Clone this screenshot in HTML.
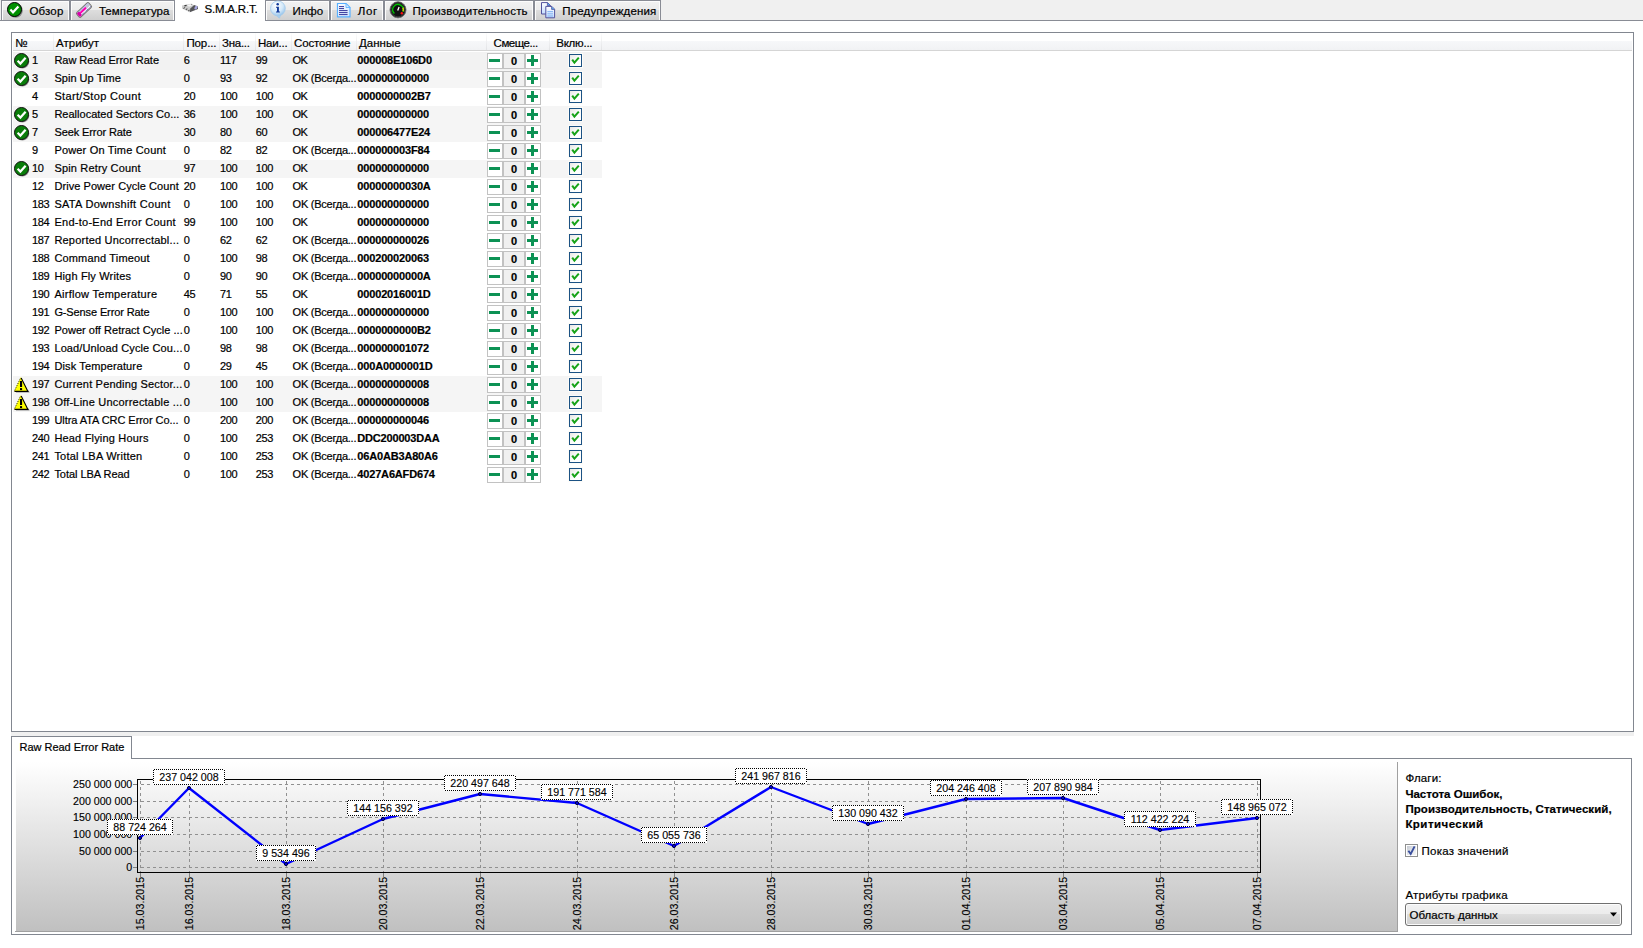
<!DOCTYPE html>
<html lang="ru"><head><meta charset="utf-8"><title>S.M.A.R.T.</title>
<style>
html,body{margin:0;padding:0;background:#fff;}
body{width:1643px;height:948px;position:relative;overflow:hidden;font-family:"Liberation Sans",sans-serif;color:#000;}
.t{position:absolute;white-space:pre;-webkit-text-stroke:0.2px #000;}
.a{position:absolute;}
.tab{position:absolute;top:0;height:20px;box-sizing:border-box;border:1px solid #898c95;border-bottom:none;
 background:linear-gradient(#f2f2f2 0,#ebebeb 50%,#dddddd 50%,#cfcfcf 100%);box-shadow:inset 1px 1px 0 #fcfcfc,inset -1px 0 0 #fcfcfc;}
.row{position:absolute;left:13px;width:589px;height:18px;background:#f2f2f2;}
.btn{position:absolute;box-sizing:border-box;height:16px;border:1px solid #c2c2c2;background:#fff;}
.cb{position:absolute;box-sizing:border-box;width:13px;height:13px;border:1px solid #1c5284;background:linear-gradient(135deg,#e8e8e4 0,#fff 60%);box-shadow:0 0 0 1px #fdfcf8;}
.hs{position:absolute;top:33px;width:1px;height:17px;background:linear-gradient(#fdfdfd,#e2e3e6);}
</style></head><body>

<div class="a" style="left:0;top:0;width:1643px;height:20px;background:#f0f0f0"></div>
<div class="a" style="left:0;top:20px;width:1643px;height:1px;background:#898c95"></div>
<div class="tab" style="left:1px;width:69px"></div>
<span class="t" style="left:29.40px;top:3.52px;font-size:11.5px;line-height:15px;letter-spacing:0.176px;">Обзор</span>
<div class="tab" style="left:70px;width:105px"></div>
<span class="t" style="left:98.90px;top:3.52px;font-size:11.5px;line-height:15px;letter-spacing:0.095px;">Температура</span>
<div class="tab" style="left:265px;width:65px"></div>
<span class="t" style="left:292.60px;top:3.52px;font-size:11.5px;line-height:15px;letter-spacing:0.054px;">Инфо</span>
<div class="tab" style="left:330px;width:54px"></div>
<span class="t" style="left:357.80px;top:3.52px;font-size:11.5px;line-height:15px;letter-spacing:0.686px;">Лог</span>
<div class="tab" style="left:384px;width:150px"></div>
<span class="t" style="left:412.60px;top:3.52px;font-size:11.5px;line-height:15px;letter-spacing:0.199px;">Производительность</span>
<div class="tab" style="left:534px;width:127px"></div>
<span class="t" style="left:562.30px;top:3.52px;font-size:11.5px;line-height:15px;letter-spacing:0.159px;">Предупреждения</span>
<div class="a" style="left:175px;top:0;width:90px;height:21px;background:#fff"></div>
<span class="t" style="left:204.40px;top:1.52px;font-size:11.5px;line-height:15px;letter-spacing:-0.175px;">S.M.A.R.T.</span>
<svg class="a" style="left:6px;top:1px" width="18" height="18" viewBox="0 0 18 18"><circle cx="9.6" cy="9.6" r="7.2" fill="#555" opacity=".6"/><circle cx="8.5" cy="8.5" r="7" fill="#009000" stroke="#000" stroke-width="1"/><path d="M4.4 8.6 L7 11.3 L12.4 5.6" fill="none" stroke="#fff" stroke-width="2.2"/></svg>
<svg class="a" style="left:74.8px;top:0.85px" width="18" height="18" viewBox="0 0 18 18"><g transform="rotate(-43 9 9)"><rect x="0.8" y="6" width="16.4" height="6" rx="1.4" fill="#ececf6" stroke="#767672" stroke-width="1.1"/><rect x="1.6" y="6.6" width="15" height="1.1" fill="#b4b4e4"/><rect x="1.4" y="7.7" width="10.8" height="2.1" fill="#ff00b0"/><rect x="12.2" y="7.7" width="4.4" height="2.1" fill="#c4c4d4"/><rect x="4.4" y="9.8" width="12.2" height=".9" fill="#fff"/><path d="M4.4 11 H16.6" stroke="#30309c" stroke-width=".8" stroke-dasharray="1 .8"/><rect x="1.3" y="6.6" width="3" height="4.8" rx=".8" fill="#d800a8"/></g></svg>
<svg class="a" style="left:181px;top:2px" width="18" height="12" viewBox="0 0 18 12"><path d="M1 3.4 L9.5 1.7 L13.4 3.2 L9.2 6.8 L8.8 10.3 L1 6.6 Z" fill="#cdcdcd"/><path d="M9.2 6.6 L13.2 3.1 L16.9 4.5 L17 7 L8.8 10.3 Z" fill="#555558"/><ellipse cx="14.9" cy="5.7" rx="1.3" ry="2" fill="#a8a8e0" transform="rotate(35 14.9 5.7)"/><path d="M6 2.9 L10 2.2 L11.8 3 L8 4.8 Z" fill="#f4f4f4"/><path d="M3.4 3.9 L5.6 3.3" stroke="#3a3a3a" stroke-width="1.3"/><path d="M2.4 6.6 L4 5.4 M4.8 7.8 L6.4 6.6 M7.2 9 L8.6 7.9" stroke="#5a5a5a" stroke-width="1.1"/><circle cx="10.6" cy="2.4" r=".7" fill="#9a9a9a"/></svg>
<svg class="a" style="left:269px;top:0px" width="18" height="19" viewBox="0 0 18 19"><defs><radialGradient id="bg1" cx=".4" cy=".3" r=".8"><stop offset="0" stop-color="#ffffff"/><stop offset=".55" stop-color="#d4e9f9"/><stop offset="1" stop-color="#86b9e6"/></radialGradient></defs><path d="M6.2 14.6 L10.4 18.2 L11.8 14.8 Z" fill="#a8d0f0" stroke="#9cc6ea" stroke-width=".6"/><circle cx="8.9" cy="8.4" r="7.4" fill="url(#bg1)" stroke="#a4cbec" stroke-width=".8"/><circle cx="8.7" cy="4.2" r="1.25" fill="#123a9a"/><path d="M7 6.7 H9.9 V11.4 H10.9 V12.5 H7 V11.4 H8 V7.8 H7 Z" fill="#123a9a"/></svg>
<svg class="a" style="left:336px;top:2px" width="16" height="16" viewBox="0 0 16 16"><defs><linearGradient id="dg" x1="0" y1="0" x2="1" y2="1"><stop offset="0" stop-color="#ffffff"/><stop offset="1" stop-color="#cfe4ff"/></linearGradient></defs><path d="M1.5 1.5 H10 L14 5.5 V14.8 H1.5 Z" fill="url(#dg)" stroke="#58b0ff" stroke-width="1.2"/><path d="M10 1.5 V5.5 H14 Z" fill="#d8ecff" stroke="#58b0ff" stroke-width=".8"/><g stroke="#34349a" stroke-width="1"><path d="M3 4.6 H8"/><path d="M3 6.6 H8"/><path d="M3 8.6 H11.6"/><path d="M3 10.6 H11.6"/><path d="M3 12.6 H11.6"/></g></svg>
<svg class="a" style="left:389px;top:1px" width="18" height="18" viewBox="0 0 18 18"><circle cx="9" cy="8.8" r="8" fill="#101010" stroke="#707070" stroke-width="1"/><circle cx="9" cy="8.8" r="7" fill="none" stroke="#3a3a3a" stroke-width="1"/><path d="M5.4 12.6 A5.3 5.3 0 1 1 14 10.6" fill="none" stroke="#00c000" stroke-width="1.4"/><path d="M13.9 6.6 A5.3 5.3 0 0 1 14.1 10.4" fill="none" stroke="#e0d000" stroke-width="1.4"/><circle cx="12.8" cy="12.2" r="1.2" fill="#ff1010"/><path d="M8.7 9.6 L10.1 6" stroke="#fff" stroke-width="1.3"/></svg>
<svg class="a" style="left:540px;top:1px" width="16" height="18" viewBox="0 0 16 18"><defs><linearGradient id="cg" x1="0" y1="0" x2="0" y2="1"><stop offset="0" stop-color="#ffffff"/><stop offset="1" stop-color="#c4dcff"/></linearGradient></defs><path d="M1.5 1.6 H7.6 L10.4 4.4 V13 H1.5 Z" fill="url(#cg)" stroke="#52529c" stroke-width="1"/><path d="M7.4 1.6 V4.6 H10.4" fill="#58a8f0" stroke="#52529c" stroke-width=".8"/><path d="M5.8 5.4 H11.8 L14.6 8.2 V16.8 H5.8 Z" fill="url(#cg)" stroke="#52529c" stroke-width="1"/><path d="M11.6 5.4 V8.4 H14.6" fill="#58a8f0" stroke="#52529c" stroke-width=".8"/><g stroke="#8cb8f4" stroke-width="1.2"><path d="M7.4 10.6 H13"/><path d="M7.4 12.8 H13"/><path d="M7.4 15 H13"/></g></svg>
<div class="a" style="left:11px;top:32px;width:1623px;height:700px;box-sizing:border-box;border:1px solid #828790;background:#fff"></div>
<div class="a" style="left:13px;top:33px;width:1619px;height:17px;background:linear-gradient(#fff 0,#fff 45%,#f7f8fa 45%,#f1f2f4 100%)"></div>
<div class="a" style="left:13px;top:50px;width:1619px;height:1px;background:#d5d5d5"></div>
<div class="hs" style="left:53px"></div>
<div class="hs" style="left:183px"></div>
<div class="hs" style="left:219px"></div>
<div class="hs" style="left:255px"></div>
<div class="hs" style="left:291px"></div>
<div class="hs" style="left:356px"></div>
<div class="hs" style="left:486px"></div>
<div class="hs" style="left:549px"></div>
<div class="hs" style="left:601px"></div>
<span class="t" style="left:15.30px;top:35.52px;font-size:11.5px;line-height:15px;">№</span>
<span class="t" style="left:56.00px;top:35.52px;font-size:11.5px;line-height:15px;letter-spacing:0.020px;">Атрибут</span>
<span class="t" style="left:186.40px;top:35.52px;font-size:11.5px;line-height:15px;letter-spacing:-0.093px;">Пор...</span>
<span class="t" style="left:222.00px;top:35.52px;font-size:11.5px;line-height:15px;letter-spacing:-0.264px;">Зна...</span>
<span class="t" style="left:258.00px;top:35.52px;font-size:11.5px;line-height:15px;letter-spacing:-0.203px;">Наи...</span>
<span class="t" style="left:294.00px;top:35.52px;font-size:11.5px;line-height:15px;letter-spacing:-0.132px;">Состояние</span>
<span class="t" style="left:359.00px;top:35.52px;font-size:11.5px;line-height:15px;letter-spacing:0.023px;">Данные</span>
<span class="t" style="left:493.60px;top:35.52px;font-size:11.5px;line-height:15px;letter-spacing:-0.490px;">Смеще...</span>
<span class="t" style="left:556.30px;top:35.52px;font-size:11.5px;line-height:15px;letter-spacing:-0.252px;">Вклю...</span>
<div class="row" style="top:52px"></div>
<svg class="a" style="left:14px;top:53px" width="16" height="16" viewBox="0 0 16 16"><circle cx="8.3" cy="8.6" r="7" fill="#3a3a3a" opacity=".55"/><circle cx="7.5" cy="7.5" r="7" fill="#0a7d0a" stroke="#111" stroke-width="1"/><path d="M3.6 7.8 L6.4 10.6 L11.6 4.8" fill="none" stroke="#fff" stroke-width="2.2"/></svg>
<span class="t" style="left:32.00px;top:53.19px;font-size:11px;line-height:14px;">1</span>
<span class="t" style="left:54.40px;top:53.19px;font-size:11px;line-height:14px;letter-spacing:-0.029px;">Raw Read Error Rate</span>
<span class="t" style="left:183.80px;top:53.19px;font-size:11px;line-height:14px;">6</span>
<span class="t" style="left:220.00px;top:53.19px;font-size:11px;line-height:14px;letter-spacing:-0.351px;">117</span>
<span class="t" style="left:255.80px;top:53.19px;font-size:11px;line-height:14px;letter-spacing:-0.368px;">99</span>
<span class="t" style="left:292.60px;top:53.19px;font-size:11px;line-height:14px;letter-spacing:-0.753px;">OK</span>
<span class="t" style="left:357.30px;top:53.19px;font-size:11px;line-height:14px;font-weight:bold;letter-spacing:-0.159px;">000008E106D0</span>
<div class="btn" style="left:487px;top:53px;width:16px"></div>
<div class="btn" style="left:503px;top:53px;width:22px;background:#f0f0f0"></div>
<div class="btn" style="left:525px;top:53px;width:16px"></div>
<div class="a" style="left:489px;top:59px;width:11px;height:3px;background:#0c9254"></div>
<div class="a" style="left:527px;top:59px;width:11px;height:3px;background:#0c9254"></div>
<div class="a" style="left:531px;top:55px;width:3px;height:11px;background:#0c9254"></div>
<span class="t" style="left:510.94px;top:54.19px;font-size:11px;line-height:14px;font-weight:bold;">0</span>
<div class="cb" style="left:569px;top:54px"></div>
<svg class="a" style="left:569px;top:54px" width="13" height="13" viewBox="0 0 13 13"><path d="M3.2 5.6 L5.4 8.6 L9.8 3.6" fill="none" stroke="#17a317" stroke-width="2"/></svg>
<div class="row" style="top:70px;background:#f5f5f5"></div>
<svg class="a" style="left:14px;top:71px" width="16" height="16" viewBox="0 0 16 16"><circle cx="8.3" cy="8.6" r="7" fill="#3a3a3a" opacity=".55"/><circle cx="7.5" cy="7.5" r="7" fill="#0a7d0a" stroke="#111" stroke-width="1"/><path d="M3.6 7.8 L6.4 10.6 L11.6 4.8" fill="none" stroke="#fff" stroke-width="2.2"/></svg>
<span class="t" style="left:32.00px;top:71.19px;font-size:11px;line-height:14px;">3</span>
<span class="t" style="left:54.40px;top:71.19px;font-size:11px;line-height:14px;letter-spacing:0.031px;">Spin Up Time</span>
<span class="t" style="left:183.80px;top:71.19px;font-size:11px;line-height:14px;">0</span>
<span class="t" style="left:220.00px;top:71.19px;font-size:11px;line-height:14px;letter-spacing:-0.368px;">93</span>
<span class="t" style="left:255.80px;top:71.19px;font-size:11px;line-height:14px;letter-spacing:-0.368px;">92</span>
<span class="t" style="left:292.60px;top:71.19px;font-size:11px;line-height:14px;letter-spacing:-0.246px;">OK (Всегда...</span>
<span class="t" style="left:357.30px;top:71.19px;font-size:11px;line-height:14px;font-weight:bold;letter-spacing:-0.153px;">000000000000</span>
<div class="btn" style="left:487px;top:71px;width:16px"></div>
<div class="btn" style="left:503px;top:71px;width:22px;background:#f0f0f0"></div>
<div class="btn" style="left:525px;top:71px;width:16px"></div>
<div class="a" style="left:489px;top:77px;width:11px;height:3px;background:#0c9254"></div>
<div class="a" style="left:527px;top:77px;width:11px;height:3px;background:#0c9254"></div>
<div class="a" style="left:531px;top:73px;width:3px;height:11px;background:#0c9254"></div>
<span class="t" style="left:510.94px;top:72.19px;font-size:11px;line-height:14px;font-weight:bold;">0</span>
<div class="cb" style="left:569px;top:72px"></div>
<svg class="a" style="left:569px;top:72px" width="13" height="13" viewBox="0 0 13 13"><path d="M3.2 5.6 L5.4 8.6 L9.8 3.6" fill="none" stroke="#17a317" stroke-width="2"/></svg>
<span class="t" style="left:32.00px;top:89.19px;font-size:11px;line-height:14px;">4</span>
<span class="t" style="left:54.40px;top:89.19px;font-size:11px;line-height:14px;letter-spacing:0.336px;">Start/Stop Count</span>
<span class="t" style="left:183.80px;top:89.19px;font-size:11px;line-height:14px;letter-spacing:-0.368px;">20</span>
<span class="t" style="left:220.00px;top:89.19px;font-size:11px;line-height:14px;letter-spacing:-0.367px;">100</span>
<span class="t" style="left:255.80px;top:89.19px;font-size:11px;line-height:14px;letter-spacing:-0.367px;">100</span>
<span class="t" style="left:292.60px;top:89.19px;font-size:11px;line-height:14px;letter-spacing:-0.753px;">OK</span>
<span class="t" style="left:357.30px;top:89.19px;font-size:11px;line-height:14px;font-weight:bold;letter-spacing:-0.157px;">0000000002B7</span>
<div class="btn" style="left:487px;top:89px;width:16px"></div>
<div class="btn" style="left:503px;top:89px;width:22px;background:#f0f0f0"></div>
<div class="btn" style="left:525px;top:89px;width:16px"></div>
<div class="a" style="left:489px;top:95px;width:11px;height:3px;background:#0c9254"></div>
<div class="a" style="left:527px;top:95px;width:11px;height:3px;background:#0c9254"></div>
<div class="a" style="left:531px;top:91px;width:3px;height:11px;background:#0c9254"></div>
<span class="t" style="left:510.94px;top:90.19px;font-size:11px;line-height:14px;font-weight:bold;">0</span>
<div class="cb" style="left:569px;top:90px"></div>
<svg class="a" style="left:569px;top:90px" width="13" height="13" viewBox="0 0 13 13"><path d="M3.2 5.6 L5.4 8.6 L9.8 3.6" fill="none" stroke="#17a317" stroke-width="2"/></svg>
<div class="row" style="top:106px;background:#f5f5f5"></div>
<svg class="a" style="left:14px;top:107px" width="16" height="16" viewBox="0 0 16 16"><circle cx="8.3" cy="8.6" r="7" fill="#3a3a3a" opacity=".55"/><circle cx="7.5" cy="7.5" r="7" fill="#0a7d0a" stroke="#111" stroke-width="1"/><path d="M3.6 7.8 L6.4 10.6 L11.6 4.8" fill="none" stroke="#fff" stroke-width="2.2"/></svg>
<span class="t" style="left:32.00px;top:107.19px;font-size:11px;line-height:14px;">5</span>
<span class="t" style="left:54.40px;top:107.19px;font-size:11px;line-height:14px;letter-spacing:0.011px;">Reallocated Sectors Co...</span>
<span class="t" style="left:183.80px;top:107.19px;font-size:11px;line-height:14px;letter-spacing:-0.368px;">36</span>
<span class="t" style="left:220.00px;top:107.19px;font-size:11px;line-height:14px;letter-spacing:-0.367px;">100</span>
<span class="t" style="left:255.80px;top:107.19px;font-size:11px;line-height:14px;letter-spacing:-0.367px;">100</span>
<span class="t" style="left:292.60px;top:107.19px;font-size:11px;line-height:14px;letter-spacing:-0.753px;">OK</span>
<span class="t" style="left:357.30px;top:107.19px;font-size:11px;line-height:14px;font-weight:bold;letter-spacing:-0.153px;">000000000000</span>
<div class="btn" style="left:487px;top:107px;width:16px"></div>
<div class="btn" style="left:503px;top:107px;width:22px;background:#f0f0f0"></div>
<div class="btn" style="left:525px;top:107px;width:16px"></div>
<div class="a" style="left:489px;top:113px;width:11px;height:3px;background:#0c9254"></div>
<div class="a" style="left:527px;top:113px;width:11px;height:3px;background:#0c9254"></div>
<div class="a" style="left:531px;top:109px;width:3px;height:11px;background:#0c9254"></div>
<span class="t" style="left:510.94px;top:108.19px;font-size:11px;line-height:14px;font-weight:bold;">0</span>
<div class="cb" style="left:569px;top:108px"></div>
<svg class="a" style="left:569px;top:108px" width="13" height="13" viewBox="0 0 13 13"><path d="M3.2 5.6 L5.4 8.6 L9.8 3.6" fill="none" stroke="#17a317" stroke-width="2"/></svg>
<div class="row" style="top:124px;background:#f5f5f5"></div>
<svg class="a" style="left:14px;top:125px" width="16" height="16" viewBox="0 0 16 16"><circle cx="8.3" cy="8.6" r="7" fill="#3a3a3a" opacity=".55"/><circle cx="7.5" cy="7.5" r="7" fill="#0a7d0a" stroke="#111" stroke-width="1"/><path d="M3.6 7.8 L6.4 10.6 L11.6 4.8" fill="none" stroke="#fff" stroke-width="2.2"/></svg>
<span class="t" style="left:32.00px;top:125.19px;font-size:11px;line-height:14px;">7</span>
<span class="t" style="left:54.40px;top:125.19px;font-size:11px;line-height:14px;letter-spacing:-0.098px;">Seek Error Rate</span>
<span class="t" style="left:183.80px;top:125.19px;font-size:11px;line-height:14px;letter-spacing:-0.368px;">30</span>
<span class="t" style="left:220.00px;top:125.19px;font-size:11px;line-height:14px;letter-spacing:-0.368px;">80</span>
<span class="t" style="left:255.80px;top:125.19px;font-size:11px;line-height:14px;letter-spacing:-0.368px;">60</span>
<span class="t" style="left:292.60px;top:125.19px;font-size:11px;line-height:14px;letter-spacing:-0.753px;">OK</span>
<span class="t" style="left:357.30px;top:125.19px;font-size:11px;line-height:14px;font-weight:bold;letter-spacing:-0.156px;">000006477E24</span>
<div class="btn" style="left:487px;top:125px;width:16px"></div>
<div class="btn" style="left:503px;top:125px;width:22px;background:#f0f0f0"></div>
<div class="btn" style="left:525px;top:125px;width:16px"></div>
<div class="a" style="left:489px;top:131px;width:11px;height:3px;background:#0c9254"></div>
<div class="a" style="left:527px;top:131px;width:11px;height:3px;background:#0c9254"></div>
<div class="a" style="left:531px;top:127px;width:3px;height:11px;background:#0c9254"></div>
<span class="t" style="left:510.94px;top:126.19px;font-size:11px;line-height:14px;font-weight:bold;">0</span>
<div class="cb" style="left:569px;top:126px"></div>
<svg class="a" style="left:569px;top:126px" width="13" height="13" viewBox="0 0 13 13"><path d="M3.2 5.6 L5.4 8.6 L9.8 3.6" fill="none" stroke="#17a317" stroke-width="2"/></svg>
<span class="t" style="left:32.00px;top:143.19px;font-size:11px;line-height:14px;">9</span>
<span class="t" style="left:54.40px;top:143.19px;font-size:11px;line-height:14px;letter-spacing:0.178px;">Power On Time Count</span>
<span class="t" style="left:183.80px;top:143.19px;font-size:11px;line-height:14px;">0</span>
<span class="t" style="left:220.00px;top:143.19px;font-size:11px;line-height:14px;letter-spacing:-0.368px;">82</span>
<span class="t" style="left:255.80px;top:143.19px;font-size:11px;line-height:14px;letter-spacing:-0.368px;">82</span>
<span class="t" style="left:292.60px;top:143.19px;font-size:11px;line-height:14px;letter-spacing:-0.246px;">OK (Всегда...</span>
<span class="t" style="left:357.30px;top:143.19px;font-size:11px;line-height:14px;font-weight:bold;letter-spacing:-0.154px;">000000003F84</span>
<div class="btn" style="left:487px;top:143px;width:16px"></div>
<div class="btn" style="left:503px;top:143px;width:22px;background:#f0f0f0"></div>
<div class="btn" style="left:525px;top:143px;width:16px"></div>
<div class="a" style="left:489px;top:149px;width:11px;height:3px;background:#0c9254"></div>
<div class="a" style="left:527px;top:149px;width:11px;height:3px;background:#0c9254"></div>
<div class="a" style="left:531px;top:145px;width:3px;height:11px;background:#0c9254"></div>
<span class="t" style="left:510.94px;top:144.19px;font-size:11px;line-height:14px;font-weight:bold;">0</span>
<div class="cb" style="left:569px;top:144px"></div>
<svg class="a" style="left:569px;top:144px" width="13" height="13" viewBox="0 0 13 13"><path d="M3.2 5.6 L5.4 8.6 L9.8 3.6" fill="none" stroke="#17a317" stroke-width="2"/></svg>
<div class="row" style="top:160px;background:#f5f5f5"></div>
<svg class="a" style="left:14px;top:161px" width="16" height="16" viewBox="0 0 16 16"><circle cx="8.3" cy="8.6" r="7" fill="#3a3a3a" opacity=".55"/><circle cx="7.5" cy="7.5" r="7" fill="#0a7d0a" stroke="#111" stroke-width="1"/><path d="M3.6 7.8 L6.4 10.6 L11.6 4.8" fill="none" stroke="#fff" stroke-width="2.2"/></svg>
<span class="t" style="left:32.00px;top:161.19px;font-size:11px;line-height:14px;letter-spacing:-0.306px;">10</span>
<span class="t" style="left:54.40px;top:161.19px;font-size:11px;line-height:14px;letter-spacing:0.165px;">Spin Retry Count</span>
<span class="t" style="left:183.80px;top:161.19px;font-size:11px;line-height:14px;letter-spacing:-0.368px;">97</span>
<span class="t" style="left:220.00px;top:161.19px;font-size:11px;line-height:14px;letter-spacing:-0.367px;">100</span>
<span class="t" style="left:255.80px;top:161.19px;font-size:11px;line-height:14px;letter-spacing:-0.367px;">100</span>
<span class="t" style="left:292.60px;top:161.19px;font-size:11px;line-height:14px;letter-spacing:-0.753px;">OK</span>
<span class="t" style="left:357.30px;top:161.19px;font-size:11px;line-height:14px;font-weight:bold;letter-spacing:-0.153px;">000000000000</span>
<div class="btn" style="left:487px;top:161px;width:16px"></div>
<div class="btn" style="left:503px;top:161px;width:22px;background:#f0f0f0"></div>
<div class="btn" style="left:525px;top:161px;width:16px"></div>
<div class="a" style="left:489px;top:167px;width:11px;height:3px;background:#0c9254"></div>
<div class="a" style="left:527px;top:167px;width:11px;height:3px;background:#0c9254"></div>
<div class="a" style="left:531px;top:163px;width:3px;height:11px;background:#0c9254"></div>
<span class="t" style="left:510.94px;top:162.19px;font-size:11px;line-height:14px;font-weight:bold;">0</span>
<div class="cb" style="left:569px;top:162px"></div>
<svg class="a" style="left:569px;top:162px" width="13" height="13" viewBox="0 0 13 13"><path d="M3.2 5.6 L5.4 8.6 L9.8 3.6" fill="none" stroke="#17a317" stroke-width="2"/></svg>
<span class="t" style="left:32.00px;top:179.19px;font-size:11px;line-height:14px;letter-spacing:-0.306px;">12</span>
<span class="t" style="left:54.40px;top:179.19px;font-size:11px;line-height:14px;letter-spacing:0.066px;">Drive Power Cycle Count</span>
<span class="t" style="left:183.80px;top:179.19px;font-size:11px;line-height:14px;letter-spacing:-0.368px;">20</span>
<span class="t" style="left:220.00px;top:179.19px;font-size:11px;line-height:14px;letter-spacing:-0.367px;">100</span>
<span class="t" style="left:255.80px;top:179.19px;font-size:11px;line-height:14px;letter-spacing:-0.367px;">100</span>
<span class="t" style="left:292.60px;top:179.19px;font-size:11px;line-height:14px;letter-spacing:-0.753px;">OK</span>
<span class="t" style="left:357.30px;top:179.19px;font-size:11px;line-height:14px;font-weight:bold;letter-spacing:-0.157px;">00000000030A</span>
<div class="btn" style="left:487px;top:179px;width:16px"></div>
<div class="btn" style="left:503px;top:179px;width:22px;background:#f0f0f0"></div>
<div class="btn" style="left:525px;top:179px;width:16px"></div>
<div class="a" style="left:489px;top:185px;width:11px;height:3px;background:#0c9254"></div>
<div class="a" style="left:527px;top:185px;width:11px;height:3px;background:#0c9254"></div>
<div class="a" style="left:531px;top:181px;width:3px;height:11px;background:#0c9254"></div>
<span class="t" style="left:510.94px;top:180.19px;font-size:11px;line-height:14px;font-weight:bold;">0</span>
<div class="cb" style="left:569px;top:180px"></div>
<svg class="a" style="left:569px;top:180px" width="13" height="13" viewBox="0 0 13 13"><path d="M3.2 5.6 L5.4 8.6 L9.8 3.6" fill="none" stroke="#17a317" stroke-width="2"/></svg>
<span class="t" style="left:32.00px;top:197.19px;font-size:11px;line-height:14px;letter-spacing:-0.306px;">183</span>
<span class="t" style="left:54.40px;top:197.19px;font-size:11px;line-height:14px;letter-spacing:0.297px;">SATA Downshift Count</span>
<span class="t" style="left:183.80px;top:197.19px;font-size:11px;line-height:14px;">0</span>
<span class="t" style="left:220.00px;top:197.19px;font-size:11px;line-height:14px;letter-spacing:-0.367px;">100</span>
<span class="t" style="left:255.80px;top:197.19px;font-size:11px;line-height:14px;letter-spacing:-0.367px;">100</span>
<span class="t" style="left:292.60px;top:197.19px;font-size:11px;line-height:14px;letter-spacing:-0.246px;">OK (Всегда...</span>
<span class="t" style="left:357.30px;top:197.19px;font-size:11px;line-height:14px;font-weight:bold;letter-spacing:-0.153px;">000000000000</span>
<div class="btn" style="left:487px;top:197px;width:16px"></div>
<div class="btn" style="left:503px;top:197px;width:22px;background:#f0f0f0"></div>
<div class="btn" style="left:525px;top:197px;width:16px"></div>
<div class="a" style="left:489px;top:203px;width:11px;height:3px;background:#0c9254"></div>
<div class="a" style="left:527px;top:203px;width:11px;height:3px;background:#0c9254"></div>
<div class="a" style="left:531px;top:199px;width:3px;height:11px;background:#0c9254"></div>
<span class="t" style="left:510.94px;top:198.19px;font-size:11px;line-height:14px;font-weight:bold;">0</span>
<div class="cb" style="left:569px;top:198px"></div>
<svg class="a" style="left:569px;top:198px" width="13" height="13" viewBox="0 0 13 13"><path d="M3.2 5.6 L5.4 8.6 L9.8 3.6" fill="none" stroke="#17a317" stroke-width="2"/></svg>
<span class="t" style="left:32.00px;top:215.19px;font-size:11px;line-height:14px;letter-spacing:-0.306px;">184</span>
<span class="t" style="left:54.40px;top:215.19px;font-size:11px;line-height:14px;letter-spacing:0.270px;">End-to-End Error Count</span>
<span class="t" style="left:183.80px;top:215.19px;font-size:11px;line-height:14px;letter-spacing:-0.368px;">99</span>
<span class="t" style="left:220.00px;top:215.19px;font-size:11px;line-height:14px;letter-spacing:-0.367px;">100</span>
<span class="t" style="left:255.80px;top:215.19px;font-size:11px;line-height:14px;letter-spacing:-0.367px;">100</span>
<span class="t" style="left:292.60px;top:215.19px;font-size:11px;line-height:14px;letter-spacing:-0.753px;">OK</span>
<span class="t" style="left:357.30px;top:215.19px;font-size:11px;line-height:14px;font-weight:bold;letter-spacing:-0.153px;">000000000000</span>
<div class="btn" style="left:487px;top:215px;width:16px"></div>
<div class="btn" style="left:503px;top:215px;width:22px;background:#f0f0f0"></div>
<div class="btn" style="left:525px;top:215px;width:16px"></div>
<div class="a" style="left:489px;top:221px;width:11px;height:3px;background:#0c9254"></div>
<div class="a" style="left:527px;top:221px;width:11px;height:3px;background:#0c9254"></div>
<div class="a" style="left:531px;top:217px;width:3px;height:11px;background:#0c9254"></div>
<span class="t" style="left:510.94px;top:216.19px;font-size:11px;line-height:14px;font-weight:bold;">0</span>
<div class="cb" style="left:569px;top:216px"></div>
<svg class="a" style="left:569px;top:216px" width="13" height="13" viewBox="0 0 13 13"><path d="M3.2 5.6 L5.4 8.6 L9.8 3.6" fill="none" stroke="#17a317" stroke-width="2"/></svg>
<span class="t" style="left:32.00px;top:233.19px;font-size:11px;line-height:14px;letter-spacing:-0.306px;">187</span>
<span class="t" style="left:54.40px;top:233.19px;font-size:11px;line-height:14px;letter-spacing:0.211px;">Reported Uncorrectabl...</span>
<span class="t" style="left:183.80px;top:233.19px;font-size:11px;line-height:14px;">0</span>
<span class="t" style="left:220.00px;top:233.19px;font-size:11px;line-height:14px;letter-spacing:-0.368px;">62</span>
<span class="t" style="left:255.80px;top:233.19px;font-size:11px;line-height:14px;letter-spacing:-0.368px;">62</span>
<span class="t" style="left:292.60px;top:233.19px;font-size:11px;line-height:14px;letter-spacing:-0.246px;">OK (Всегда...</span>
<span class="t" style="left:357.30px;top:233.19px;font-size:11px;line-height:14px;font-weight:bold;letter-spacing:-0.153px;">000000000026</span>
<div class="btn" style="left:487px;top:233px;width:16px"></div>
<div class="btn" style="left:503px;top:233px;width:22px;background:#f0f0f0"></div>
<div class="btn" style="left:525px;top:233px;width:16px"></div>
<div class="a" style="left:489px;top:239px;width:11px;height:3px;background:#0c9254"></div>
<div class="a" style="left:527px;top:239px;width:11px;height:3px;background:#0c9254"></div>
<div class="a" style="left:531px;top:235px;width:3px;height:11px;background:#0c9254"></div>
<span class="t" style="left:510.94px;top:234.19px;font-size:11px;line-height:14px;font-weight:bold;">0</span>
<div class="cb" style="left:569px;top:234px"></div>
<svg class="a" style="left:569px;top:234px" width="13" height="13" viewBox="0 0 13 13"><path d="M3.2 5.6 L5.4 8.6 L9.8 3.6" fill="none" stroke="#17a317" stroke-width="2"/></svg>
<span class="t" style="left:32.00px;top:251.19px;font-size:11px;line-height:14px;letter-spacing:-0.306px;">188</span>
<span class="t" style="left:54.40px;top:251.19px;font-size:11px;line-height:14px;letter-spacing:0.164px;">Command Timeout</span>
<span class="t" style="left:183.80px;top:251.19px;font-size:11px;line-height:14px;">0</span>
<span class="t" style="left:220.00px;top:251.19px;font-size:11px;line-height:14px;letter-spacing:-0.367px;">100</span>
<span class="t" style="left:255.80px;top:251.19px;font-size:11px;line-height:14px;letter-spacing:-0.368px;">98</span>
<span class="t" style="left:292.60px;top:251.19px;font-size:11px;line-height:14px;letter-spacing:-0.246px;">OK (Всегда...</span>
<span class="t" style="left:357.30px;top:251.19px;font-size:11px;line-height:14px;font-weight:bold;letter-spacing:-0.153px;">000200020063</span>
<div class="btn" style="left:487px;top:251px;width:16px"></div>
<div class="btn" style="left:503px;top:251px;width:22px;background:#f0f0f0"></div>
<div class="btn" style="left:525px;top:251px;width:16px"></div>
<div class="a" style="left:489px;top:257px;width:11px;height:3px;background:#0c9254"></div>
<div class="a" style="left:527px;top:257px;width:11px;height:3px;background:#0c9254"></div>
<div class="a" style="left:531px;top:253px;width:3px;height:11px;background:#0c9254"></div>
<span class="t" style="left:510.94px;top:252.19px;font-size:11px;line-height:14px;font-weight:bold;">0</span>
<div class="cb" style="left:569px;top:252px"></div>
<svg class="a" style="left:569px;top:252px" width="13" height="13" viewBox="0 0 13 13"><path d="M3.2 5.6 L5.4 8.6 L9.8 3.6" fill="none" stroke="#17a317" stroke-width="2"/></svg>
<span class="t" style="left:32.00px;top:269.19px;font-size:11px;line-height:14px;letter-spacing:-0.306px;">189</span>
<span class="t" style="left:54.40px;top:269.19px;font-size:11px;line-height:14px;letter-spacing:0.162px;">High Fly Writes</span>
<span class="t" style="left:183.80px;top:269.19px;font-size:11px;line-height:14px;">0</span>
<span class="t" style="left:220.00px;top:269.19px;font-size:11px;line-height:14px;letter-spacing:-0.368px;">90</span>
<span class="t" style="left:255.80px;top:269.19px;font-size:11px;line-height:14px;letter-spacing:-0.368px;">90</span>
<span class="t" style="left:292.60px;top:269.19px;font-size:11px;line-height:14px;letter-spacing:-0.246px;">OK (Всегда...</span>
<span class="t" style="left:357.30px;top:269.19px;font-size:11px;line-height:14px;font-weight:bold;letter-spacing:-0.157px;">00000000000A</span>
<div class="btn" style="left:487px;top:269px;width:16px"></div>
<div class="btn" style="left:503px;top:269px;width:22px;background:#f0f0f0"></div>
<div class="btn" style="left:525px;top:269px;width:16px"></div>
<div class="a" style="left:489px;top:275px;width:11px;height:3px;background:#0c9254"></div>
<div class="a" style="left:527px;top:275px;width:11px;height:3px;background:#0c9254"></div>
<div class="a" style="left:531px;top:271px;width:3px;height:11px;background:#0c9254"></div>
<span class="t" style="left:510.94px;top:270.19px;font-size:11px;line-height:14px;font-weight:bold;">0</span>
<div class="cb" style="left:569px;top:270px"></div>
<svg class="a" style="left:569px;top:270px" width="13" height="13" viewBox="0 0 13 13"><path d="M3.2 5.6 L5.4 8.6 L9.8 3.6" fill="none" stroke="#17a317" stroke-width="2"/></svg>
<span class="t" style="left:32.00px;top:287.19px;font-size:11px;line-height:14px;letter-spacing:-0.306px;">190</span>
<span class="t" style="left:54.40px;top:287.19px;font-size:11px;line-height:14px;letter-spacing:0.278px;">Airflow Temperature</span>
<span class="t" style="left:183.80px;top:287.19px;font-size:11px;line-height:14px;letter-spacing:-0.368px;">45</span>
<span class="t" style="left:220.00px;top:287.19px;font-size:11px;line-height:14px;letter-spacing:-0.368px;">71</span>
<span class="t" style="left:255.80px;top:287.19px;font-size:11px;line-height:14px;letter-spacing:-0.368px;">55</span>
<span class="t" style="left:292.60px;top:287.19px;font-size:11px;line-height:14px;letter-spacing:-0.753px;">OK</span>
<span class="t" style="left:357.30px;top:287.19px;font-size:11px;line-height:14px;font-weight:bold;letter-spacing:-0.157px;">00002016001D</span>
<div class="btn" style="left:487px;top:287px;width:16px"></div>
<div class="btn" style="left:503px;top:287px;width:22px;background:#f0f0f0"></div>
<div class="btn" style="left:525px;top:287px;width:16px"></div>
<div class="a" style="left:489px;top:293px;width:11px;height:3px;background:#0c9254"></div>
<div class="a" style="left:527px;top:293px;width:11px;height:3px;background:#0c9254"></div>
<div class="a" style="left:531px;top:289px;width:3px;height:11px;background:#0c9254"></div>
<span class="t" style="left:510.94px;top:288.19px;font-size:11px;line-height:14px;font-weight:bold;">0</span>
<div class="cb" style="left:569px;top:288px"></div>
<svg class="a" style="left:569px;top:288px" width="13" height="13" viewBox="0 0 13 13"><path d="M3.2 5.6 L5.4 8.6 L9.8 3.6" fill="none" stroke="#17a317" stroke-width="2"/></svg>
<span class="t" style="left:32.00px;top:305.19px;font-size:11px;line-height:14px;letter-spacing:-0.306px;">191</span>
<span class="t" style="left:54.40px;top:305.19px;font-size:11px;line-height:14px;letter-spacing:-0.122px;">G-Sense Error Rate</span>
<span class="t" style="left:183.80px;top:305.19px;font-size:11px;line-height:14px;">0</span>
<span class="t" style="left:220.00px;top:305.19px;font-size:11px;line-height:14px;letter-spacing:-0.367px;">100</span>
<span class="t" style="left:255.80px;top:305.19px;font-size:11px;line-height:14px;letter-spacing:-0.367px;">100</span>
<span class="t" style="left:292.60px;top:305.19px;font-size:11px;line-height:14px;letter-spacing:-0.246px;">OK (Всегда...</span>
<span class="t" style="left:357.30px;top:305.19px;font-size:11px;line-height:14px;font-weight:bold;letter-spacing:-0.153px;">000000000000</span>
<div class="btn" style="left:487px;top:305px;width:16px"></div>
<div class="btn" style="left:503px;top:305px;width:22px;background:#f0f0f0"></div>
<div class="btn" style="left:525px;top:305px;width:16px"></div>
<div class="a" style="left:489px;top:311px;width:11px;height:3px;background:#0c9254"></div>
<div class="a" style="left:527px;top:311px;width:11px;height:3px;background:#0c9254"></div>
<div class="a" style="left:531px;top:307px;width:3px;height:11px;background:#0c9254"></div>
<span class="t" style="left:510.94px;top:306.19px;font-size:11px;line-height:14px;font-weight:bold;">0</span>
<div class="cb" style="left:569px;top:306px"></div>
<svg class="a" style="left:569px;top:306px" width="13" height="13" viewBox="0 0 13 13"><path d="M3.2 5.6 L5.4 8.6 L9.8 3.6" fill="none" stroke="#17a317" stroke-width="2"/></svg>
<span class="t" style="left:32.00px;top:323.19px;font-size:11px;line-height:14px;letter-spacing:-0.306px;">192</span>
<span class="t" style="left:54.40px;top:323.19px;font-size:11px;line-height:14px;letter-spacing:0.030px;">Power off Retract Cycle ...</span>
<span class="t" style="left:183.80px;top:323.19px;font-size:11px;line-height:14px;">0</span>
<span class="t" style="left:220.00px;top:323.19px;font-size:11px;line-height:14px;letter-spacing:-0.367px;">100</span>
<span class="t" style="left:255.80px;top:323.19px;font-size:11px;line-height:14px;letter-spacing:-0.367px;">100</span>
<span class="t" style="left:292.60px;top:323.19px;font-size:11px;line-height:14px;letter-spacing:-0.246px;">OK (Всегда...</span>
<span class="t" style="left:357.30px;top:323.19px;font-size:11px;line-height:14px;font-weight:bold;letter-spacing:-0.157px;">0000000000B2</span>
<div class="btn" style="left:487px;top:323px;width:16px"></div>
<div class="btn" style="left:503px;top:323px;width:22px;background:#f0f0f0"></div>
<div class="btn" style="left:525px;top:323px;width:16px"></div>
<div class="a" style="left:489px;top:329px;width:11px;height:3px;background:#0c9254"></div>
<div class="a" style="left:527px;top:329px;width:11px;height:3px;background:#0c9254"></div>
<div class="a" style="left:531px;top:325px;width:3px;height:11px;background:#0c9254"></div>
<span class="t" style="left:510.94px;top:324.19px;font-size:11px;line-height:14px;font-weight:bold;">0</span>
<div class="cb" style="left:569px;top:324px"></div>
<svg class="a" style="left:569px;top:324px" width="13" height="13" viewBox="0 0 13 13"><path d="M3.2 5.6 L5.4 8.6 L9.8 3.6" fill="none" stroke="#17a317" stroke-width="2"/></svg>
<span class="t" style="left:32.00px;top:341.19px;font-size:11px;line-height:14px;letter-spacing:-0.306px;">193</span>
<span class="t" style="left:54.40px;top:341.19px;font-size:11px;line-height:14px;letter-spacing:0.118px;">Load/Unload Cycle Cou...</span>
<span class="t" style="left:183.80px;top:341.19px;font-size:11px;line-height:14px;">0</span>
<span class="t" style="left:220.00px;top:341.19px;font-size:11px;line-height:14px;letter-spacing:-0.368px;">98</span>
<span class="t" style="left:255.80px;top:341.19px;font-size:11px;line-height:14px;letter-spacing:-0.368px;">98</span>
<span class="t" style="left:292.60px;top:341.19px;font-size:11px;line-height:14px;letter-spacing:-0.246px;">OK (Всегда...</span>
<span class="t" style="left:357.30px;top:341.19px;font-size:11px;line-height:14px;font-weight:bold;letter-spacing:-0.153px;">000000001072</span>
<div class="btn" style="left:487px;top:341px;width:16px"></div>
<div class="btn" style="left:503px;top:341px;width:22px;background:#f0f0f0"></div>
<div class="btn" style="left:525px;top:341px;width:16px"></div>
<div class="a" style="left:489px;top:347px;width:11px;height:3px;background:#0c9254"></div>
<div class="a" style="left:527px;top:347px;width:11px;height:3px;background:#0c9254"></div>
<div class="a" style="left:531px;top:343px;width:3px;height:11px;background:#0c9254"></div>
<span class="t" style="left:510.94px;top:342.19px;font-size:11px;line-height:14px;font-weight:bold;">0</span>
<div class="cb" style="left:569px;top:342px"></div>
<svg class="a" style="left:569px;top:342px" width="13" height="13" viewBox="0 0 13 13"><path d="M3.2 5.6 L5.4 8.6 L9.8 3.6" fill="none" stroke="#17a317" stroke-width="2"/></svg>
<span class="t" style="left:32.00px;top:359.19px;font-size:11px;line-height:14px;letter-spacing:-0.306px;">194</span>
<span class="t" style="left:54.40px;top:359.19px;font-size:11px;line-height:14px;letter-spacing:0.125px;">Disk Temperature</span>
<span class="t" style="left:183.80px;top:359.19px;font-size:11px;line-height:14px;">0</span>
<span class="t" style="left:220.00px;top:359.19px;font-size:11px;line-height:14px;letter-spacing:-0.368px;">29</span>
<span class="t" style="left:255.80px;top:359.19px;font-size:11px;line-height:14px;letter-spacing:-0.368px;">45</span>
<span class="t" style="left:292.60px;top:359.19px;font-size:11px;line-height:14px;letter-spacing:-0.246px;">OK (Всегда...</span>
<span class="t" style="left:357.30px;top:359.19px;font-size:11px;line-height:14px;font-weight:bold;letter-spacing:-0.161px;">000A0000001D</span>
<div class="btn" style="left:487px;top:359px;width:16px"></div>
<div class="btn" style="left:503px;top:359px;width:22px;background:#f0f0f0"></div>
<div class="btn" style="left:525px;top:359px;width:16px"></div>
<div class="a" style="left:489px;top:365px;width:11px;height:3px;background:#0c9254"></div>
<div class="a" style="left:527px;top:365px;width:11px;height:3px;background:#0c9254"></div>
<div class="a" style="left:531px;top:361px;width:3px;height:11px;background:#0c9254"></div>
<span class="t" style="left:510.94px;top:360.19px;font-size:11px;line-height:14px;font-weight:bold;">0</span>
<div class="cb" style="left:569px;top:360px"></div>
<svg class="a" style="left:569px;top:360px" width="13" height="13" viewBox="0 0 13 13"><path d="M3.2 5.6 L5.4 8.6 L9.8 3.6" fill="none" stroke="#17a317" stroke-width="2"/></svg>
<div class="row" style="top:376px;background:#f5f5f5"></div>
<svg class="a" style="left:14px;top:377px" width="17" height="17" viewBox="0 0 17 17"><path d="M14.6 13.4 L15.6 15.6 L2 15.6 L2 14.6 Z" fill="#8a8a8a"/><path d="M6.9 0.1 L13.9 14.4 L0.1 14.4 Z" fill="#ffff00"/><path d="M7.2 0.9 L13.9 14.4 L0.5 14.4" fill="none" stroke="#000" stroke-width="1.1"/><path d="M6.3 1.6 L0.7 13.4" stroke="#3c3c00" stroke-width="1" stroke-dasharray="1.2 1.2"/><rect x="6" y="4" width="2.1" height="6" fill="#000"/><rect x="6" y="11.1" width="2.1" height="2" fill="#000"/></svg>
<span class="t" style="left:32.00px;top:377.19px;font-size:11px;line-height:14px;letter-spacing:-0.306px;">197</span>
<span class="t" style="left:54.40px;top:377.19px;font-size:11px;line-height:14px;letter-spacing:0.187px;">Current Pending Sector...</span>
<span class="t" style="left:183.80px;top:377.19px;font-size:11px;line-height:14px;">0</span>
<span class="t" style="left:220.00px;top:377.19px;font-size:11px;line-height:14px;letter-spacing:-0.367px;">100</span>
<span class="t" style="left:255.80px;top:377.19px;font-size:11px;line-height:14px;letter-spacing:-0.367px;">100</span>
<span class="t" style="left:292.60px;top:377.19px;font-size:11px;line-height:14px;letter-spacing:-0.246px;">OK (Всегда...</span>
<span class="t" style="left:357.30px;top:377.19px;font-size:11px;line-height:14px;font-weight:bold;letter-spacing:-0.153px;">000000000008</span>
<div class="btn" style="left:487px;top:377px;width:16px"></div>
<div class="btn" style="left:503px;top:377px;width:22px;background:#f0f0f0"></div>
<div class="btn" style="left:525px;top:377px;width:16px"></div>
<div class="a" style="left:489px;top:383px;width:11px;height:3px;background:#0c9254"></div>
<div class="a" style="left:527px;top:383px;width:11px;height:3px;background:#0c9254"></div>
<div class="a" style="left:531px;top:379px;width:3px;height:11px;background:#0c9254"></div>
<span class="t" style="left:510.94px;top:378.19px;font-size:11px;line-height:14px;font-weight:bold;">0</span>
<div class="cb" style="left:569px;top:378px"></div>
<svg class="a" style="left:569px;top:378px" width="13" height="13" viewBox="0 0 13 13"><path d="M3.2 5.6 L5.4 8.6 L9.8 3.6" fill="none" stroke="#17a317" stroke-width="2"/></svg>
<div class="row" style="top:394px;background:#f5f5f5"></div>
<svg class="a" style="left:14px;top:395px" width="17" height="17" viewBox="0 0 17 17"><path d="M14.6 13.4 L15.6 15.6 L2 15.6 L2 14.6 Z" fill="#8a8a8a"/><path d="M6.9 0.1 L13.9 14.4 L0.1 14.4 Z" fill="#ffff00"/><path d="M7.2 0.9 L13.9 14.4 L0.5 14.4" fill="none" stroke="#000" stroke-width="1.1"/><path d="M6.3 1.6 L0.7 13.4" stroke="#3c3c00" stroke-width="1" stroke-dasharray="1.2 1.2"/><rect x="6" y="4" width="2.1" height="6" fill="#000"/><rect x="6" y="11.1" width="2.1" height="2" fill="#000"/></svg>
<span class="t" style="left:32.00px;top:395.19px;font-size:11px;line-height:14px;letter-spacing:-0.306px;">198</span>
<span class="t" style="left:54.40px;top:395.19px;font-size:11px;line-height:14px;letter-spacing:0.212px;">Off-Line Uncorrectable ...</span>
<span class="t" style="left:183.80px;top:395.19px;font-size:11px;line-height:14px;">0</span>
<span class="t" style="left:220.00px;top:395.19px;font-size:11px;line-height:14px;letter-spacing:-0.367px;">100</span>
<span class="t" style="left:255.80px;top:395.19px;font-size:11px;line-height:14px;letter-spacing:-0.367px;">100</span>
<span class="t" style="left:292.60px;top:395.19px;font-size:11px;line-height:14px;letter-spacing:-0.246px;">OK (Всегда...</span>
<span class="t" style="left:357.30px;top:395.19px;font-size:11px;line-height:14px;font-weight:bold;letter-spacing:-0.153px;">000000000008</span>
<div class="btn" style="left:487px;top:395px;width:16px"></div>
<div class="btn" style="left:503px;top:395px;width:22px;background:#f0f0f0"></div>
<div class="btn" style="left:525px;top:395px;width:16px"></div>
<div class="a" style="left:489px;top:401px;width:11px;height:3px;background:#0c9254"></div>
<div class="a" style="left:527px;top:401px;width:11px;height:3px;background:#0c9254"></div>
<div class="a" style="left:531px;top:397px;width:3px;height:11px;background:#0c9254"></div>
<span class="t" style="left:510.94px;top:396.19px;font-size:11px;line-height:14px;font-weight:bold;">0</span>
<div class="cb" style="left:569px;top:396px"></div>
<svg class="a" style="left:569px;top:396px" width="13" height="13" viewBox="0 0 13 13"><path d="M3.2 5.6 L5.4 8.6 L9.8 3.6" fill="none" stroke="#17a317" stroke-width="2"/></svg>
<span class="t" style="left:32.00px;top:413.19px;font-size:11px;line-height:14px;letter-spacing:-0.306px;">199</span>
<span class="t" style="left:54.40px;top:413.19px;font-size:11px;line-height:14px;letter-spacing:-0.057px;">Ultra ATA CRC Error Co...</span>
<span class="t" style="left:183.80px;top:413.19px;font-size:11px;line-height:14px;">0</span>
<span class="t" style="left:220.00px;top:413.19px;font-size:11px;line-height:14px;letter-spacing:-0.367px;">200</span>
<span class="t" style="left:255.80px;top:413.19px;font-size:11px;line-height:14px;letter-spacing:-0.367px;">200</span>
<span class="t" style="left:292.60px;top:413.19px;font-size:11px;line-height:14px;letter-spacing:-0.246px;">OK (Всегда...</span>
<span class="t" style="left:357.30px;top:413.19px;font-size:11px;line-height:14px;font-weight:bold;letter-spacing:-0.153px;">000000000046</span>
<div class="btn" style="left:487px;top:413px;width:16px"></div>
<div class="btn" style="left:503px;top:413px;width:22px;background:#f0f0f0"></div>
<div class="btn" style="left:525px;top:413px;width:16px"></div>
<div class="a" style="left:489px;top:419px;width:11px;height:3px;background:#0c9254"></div>
<div class="a" style="left:527px;top:419px;width:11px;height:3px;background:#0c9254"></div>
<div class="a" style="left:531px;top:415px;width:3px;height:11px;background:#0c9254"></div>
<span class="t" style="left:510.94px;top:414.19px;font-size:11px;line-height:14px;font-weight:bold;">0</span>
<div class="cb" style="left:569px;top:414px"></div>
<svg class="a" style="left:569px;top:414px" width="13" height="13" viewBox="0 0 13 13"><path d="M3.2 5.6 L5.4 8.6 L9.8 3.6" fill="none" stroke="#17a317" stroke-width="2"/></svg>
<span class="t" style="left:32.00px;top:431.19px;font-size:11px;line-height:14px;letter-spacing:-0.306px;">240</span>
<span class="t" style="left:54.40px;top:431.19px;font-size:11px;line-height:14px;letter-spacing:0.183px;">Head Flying Hours</span>
<span class="t" style="left:183.80px;top:431.19px;font-size:11px;line-height:14px;">0</span>
<span class="t" style="left:220.00px;top:431.19px;font-size:11px;line-height:14px;letter-spacing:-0.367px;">100</span>
<span class="t" style="left:255.80px;top:431.19px;font-size:11px;line-height:14px;letter-spacing:-0.367px;">253</span>
<span class="t" style="left:292.60px;top:431.19px;font-size:11px;line-height:14px;letter-spacing:-0.246px;">OK (Всегда...</span>
<span class="t" style="left:357.30px;top:431.19px;font-size:11px;line-height:14px;font-weight:bold;letter-spacing:-0.176px;">DDC200003DAA</span>
<div class="btn" style="left:487px;top:431px;width:16px"></div>
<div class="btn" style="left:503px;top:431px;width:22px;background:#f0f0f0"></div>
<div class="btn" style="left:525px;top:431px;width:16px"></div>
<div class="a" style="left:489px;top:437px;width:11px;height:3px;background:#0c9254"></div>
<div class="a" style="left:527px;top:437px;width:11px;height:3px;background:#0c9254"></div>
<div class="a" style="left:531px;top:433px;width:3px;height:11px;background:#0c9254"></div>
<span class="t" style="left:510.94px;top:432.19px;font-size:11px;line-height:14px;font-weight:bold;">0</span>
<div class="cb" style="left:569px;top:432px"></div>
<svg class="a" style="left:569px;top:432px" width="13" height="13" viewBox="0 0 13 13"><path d="M3.2 5.6 L5.4 8.6 L9.8 3.6" fill="none" stroke="#17a317" stroke-width="2"/></svg>
<span class="t" style="left:32.00px;top:449.19px;font-size:11px;line-height:14px;letter-spacing:-0.306px;">241</span>
<span class="t" style="left:54.40px;top:449.19px;font-size:11px;line-height:14px;letter-spacing:0.225px;">Total LBA Written</span>
<span class="t" style="left:183.80px;top:449.19px;font-size:11px;line-height:14px;">0</span>
<span class="t" style="left:220.00px;top:449.19px;font-size:11px;line-height:14px;letter-spacing:-0.367px;">100</span>
<span class="t" style="left:255.80px;top:449.19px;font-size:11px;line-height:14px;letter-spacing:-0.367px;">253</span>
<span class="t" style="left:292.60px;top:449.19px;font-size:11px;line-height:14px;letter-spacing:-0.246px;">OK (Всегда...</span>
<span class="t" style="left:357.30px;top:449.19px;font-size:11px;line-height:14px;font-weight:bold;letter-spacing:-0.172px;">06A0AB3A80A6</span>
<div class="btn" style="left:487px;top:449px;width:16px"></div>
<div class="btn" style="left:503px;top:449px;width:22px;background:#f0f0f0"></div>
<div class="btn" style="left:525px;top:449px;width:16px"></div>
<div class="a" style="left:489px;top:455px;width:11px;height:3px;background:#0c9254"></div>
<div class="a" style="left:527px;top:455px;width:11px;height:3px;background:#0c9254"></div>
<div class="a" style="left:531px;top:451px;width:3px;height:11px;background:#0c9254"></div>
<span class="t" style="left:510.94px;top:450.19px;font-size:11px;line-height:14px;font-weight:bold;">0</span>
<div class="cb" style="left:569px;top:450px"></div>
<svg class="a" style="left:569px;top:450px" width="13" height="13" viewBox="0 0 13 13"><path d="M3.2 5.6 L5.4 8.6 L9.8 3.6" fill="none" stroke="#17a317" stroke-width="2"/></svg>
<span class="t" style="left:32.00px;top:467.19px;font-size:11px;line-height:14px;letter-spacing:-0.306px;">242</span>
<span class="t" style="left:54.40px;top:467.19px;font-size:11px;line-height:14px;letter-spacing:-0.039px;">Total LBA Read</span>
<span class="t" style="left:183.80px;top:467.19px;font-size:11px;line-height:14px;">0</span>
<span class="t" style="left:220.00px;top:467.19px;font-size:11px;line-height:14px;letter-spacing:-0.367px;">100</span>
<span class="t" style="left:255.80px;top:467.19px;font-size:11px;line-height:14px;letter-spacing:-0.367px;">253</span>
<span class="t" style="left:292.60px;top:467.19px;font-size:11px;line-height:14px;letter-spacing:-0.246px;">OK (Всегда...</span>
<span class="t" style="left:357.30px;top:467.19px;font-size:11px;line-height:14px;font-weight:bold;letter-spacing:-0.166px;">4027A6AFD674</span>
<div class="btn" style="left:487px;top:467px;width:16px"></div>
<div class="btn" style="left:503px;top:467px;width:22px;background:#f0f0f0"></div>
<div class="btn" style="left:525px;top:467px;width:16px"></div>
<div class="a" style="left:489px;top:473px;width:11px;height:3px;background:#0c9254"></div>
<div class="a" style="left:527px;top:473px;width:11px;height:3px;background:#0c9254"></div>
<div class="a" style="left:531px;top:469px;width:3px;height:11px;background:#0c9254"></div>
<span class="t" style="left:510.94px;top:468.19px;font-size:11px;line-height:14px;font-weight:bold;">0</span>
<div class="cb" style="left:569px;top:468px"></div>
<svg class="a" style="left:569px;top:468px" width="13" height="13" viewBox="0 0 13 13"><path d="M3.2 5.6 L5.4 8.6 L9.8 3.6" fill="none" stroke="#17a317" stroke-width="2"/></svg>
<div class="a" style="left:11px;top:732px;width:1623px;height:4px;background:#f0f0f0"></div>
<div class="a" style="left:11px;top:758px;width:1621px;height:177px;box-sizing:border-box;border:1px solid #828790;background:#fff"></div>
<div class="a" style="left:11px;top:736px;width:121px;height:23px;box-sizing:border-box;border:1px solid #828790;border-bottom:none;background:#fff"></div>
<span class="t" style="left:19.50px;top:740.19px;font-size:11px;line-height:14px;letter-spacing:-0.019px;">Raw Read Error Rate</span>
<svg class="a" style="left:16px;top:762px" width="1381" height="169" viewBox="16 762 1381 169" font-family="Liberation Sans, sans-serif" font-size="10.67"><style>text{stroke:#000;stroke-width:.14px}</style><defs><linearGradient id="g" x1="0" y1="0" x2="0" y2="1"><stop offset="0" stop-color="#ffffff"/><stop offset="1" stop-color="#c0c0c0"/></linearGradient></defs><rect x="16" y="762" width="1381" height="169" fill="url(#g)"/><g shape-rendering="crispEdges"><line x1="141" y1="867.5" x2="1260" y2="867.5" stroke="#909090" stroke-dasharray="3 3"/><line x1="133" y1="867.5" x2="137" y2="867.5" stroke="#808080"/><line x1="141" y1="851.5" x2="1260" y2="851.5" stroke="#909090" stroke-dasharray="3 3"/><line x1="133" y1="851.5" x2="137" y2="851.5" stroke="#808080"/><line x1="141" y1="834.5" x2="1260" y2="834.5" stroke="#909090" stroke-dasharray="3 3"/><line x1="133" y1="834.5" x2="137" y2="834.5" stroke="#808080"/><line x1="141" y1="817.5" x2="1260" y2="817.5" stroke="#909090" stroke-dasharray="3 3"/><line x1="133" y1="817.5" x2="137" y2="817.5" stroke="#808080"/><line x1="141" y1="801.5" x2="1260" y2="801.5" stroke="#909090" stroke-dasharray="3 3"/><line x1="133" y1="801.5" x2="137" y2="801.5" stroke="#808080"/><line x1="141" y1="784.5" x2="1260" y2="784.5" stroke="#909090" stroke-dasharray="3 3"/><line x1="133" y1="784.5" x2="137" y2="784.5" stroke="#808080"/><line x1="140.5" y1="781" x2="140.5" y2="872" stroke="#909090" stroke-dasharray="3 3"/><line x1="140.5" y1="873" x2="140.5" y2="877" stroke="#808080"/><line x1="189.5" y1="781" x2="189.5" y2="872" stroke="#909090" stroke-dasharray="3 3"/><line x1="189.5" y1="873" x2="189.5" y2="877" stroke="#808080"/><line x1="286.5" y1="781" x2="286.5" y2="872" stroke="#909090" stroke-dasharray="3 3"/><line x1="286.5" y1="873" x2="286.5" y2="877" stroke="#808080"/><line x1="383.5" y1="781" x2="383.5" y2="872" stroke="#909090" stroke-dasharray="3 3"/><line x1="383.5" y1="873" x2="383.5" y2="877" stroke="#808080"/><line x1="480.5" y1="781" x2="480.5" y2="872" stroke="#909090" stroke-dasharray="3 3"/><line x1="480.5" y1="873" x2="480.5" y2="877" stroke="#808080"/><line x1="577.5" y1="781" x2="577.5" y2="872" stroke="#909090" stroke-dasharray="3 3"/><line x1="577.5" y1="873" x2="577.5" y2="877" stroke="#808080"/><line x1="674.5" y1="781" x2="674.5" y2="872" stroke="#909090" stroke-dasharray="3 3"/><line x1="674.5" y1="873" x2="674.5" y2="877" stroke="#808080"/><line x1="771.5" y1="781" x2="771.5" y2="872" stroke="#909090" stroke-dasharray="3 3"/><line x1="771.5" y1="873" x2="771.5" y2="877" stroke="#808080"/><line x1="868.5" y1="781" x2="868.5" y2="872" stroke="#909090" stroke-dasharray="3 3"/><line x1="868.5" y1="873" x2="868.5" y2="877" stroke="#808080"/><line x1="966.5" y1="781" x2="966.5" y2="872" stroke="#909090" stroke-dasharray="3 3"/><line x1="966.5" y1="873" x2="966.5" y2="877" stroke="#808080"/><line x1="1063.5" y1="781" x2="1063.5" y2="872" stroke="#909090" stroke-dasharray="3 3"/><line x1="1063.5" y1="873" x2="1063.5" y2="877" stroke="#808080"/><line x1="1160.5" y1="781" x2="1160.5" y2="872" stroke="#909090" stroke-dasharray="3 3"/><line x1="1160.5" y1="873" x2="1160.5" y2="877" stroke="#808080"/><line x1="1257.5" y1="781" x2="1257.5" y2="872" stroke="#909090" stroke-dasharray="3 3"/><line x1="1257.5" y1="873" x2="1257.5" y2="877" stroke="#808080"/><rect x="137.5" y="779.5" width="1123" height="93" fill="none" stroke="#000"/></g><text x="132.3" y="871.2" text-anchor="end">0</text><text x="132.3" y="855.2" text-anchor="end">50 000 000</text><text x="132.3" y="838.2" text-anchor="end">100 000 000</text><text x="132.3" y="821.2" text-anchor="end">150 000 000</text><text x="132.3" y="805.2" text-anchor="end">200 000 000</text><text x="132.3" y="788.2" text-anchor="end">250 000 000</text><text transform="translate(144.2 930.2) rotate(-90)">15.03.2015</text><text transform="translate(193.2 930.2) rotate(-90)">16.03.2015</text><text transform="translate(290.2 930.2) rotate(-90)">18.03.2015</text><text transform="translate(387.2 930.2) rotate(-90)">20.03.2015</text><text transform="translate(484.2 930.2) rotate(-90)">22.03.2015</text><text transform="translate(581.2 930.2) rotate(-90)">24.03.2015</text><text transform="translate(678.2 930.2) rotate(-90)">26.03.2015</text><text transform="translate(775.2 930.2) rotate(-90)">28.03.2015</text><text transform="translate(872.2 930.2) rotate(-90)">30.03.2015</text><text transform="translate(970.2 930.2) rotate(-90)">01.04.2015</text><text transform="translate(1067.2 930.2) rotate(-90)">03.04.2015</text><text transform="translate(1164.2 930.2) rotate(-90)">05.04.2015</text><text transform="translate(1261.2 930.2) rotate(-90)">07.04.2015</text><polyline points="140,838 189,788 286,864 383,819 480,794 577,803 674,846 771,787 868,824 966,799 1063,798 1160,830 1257,818" fill="none" stroke="#0000ff" stroke-width="2.4" stroke-linejoin="round"/><circle cx="140" cy="838" r="1.6" fill="#0000e0" stroke="#000040" stroke-width="1"/><circle cx="189" cy="788" r="1.6" fill="#0000e0" stroke="#000040" stroke-width="1"/><circle cx="286" cy="864" r="1.6" fill="#0000e0" stroke="#000040" stroke-width="1"/><circle cx="383" cy="819" r="1.6" fill="#0000e0" stroke="#000040" stroke-width="1"/><circle cx="480" cy="794" r="1.6" fill="#0000e0" stroke="#000040" stroke-width="1"/><circle cx="577" cy="803" r="1.6" fill="#0000e0" stroke="#000040" stroke-width="1"/><circle cx="674" cy="846" r="1.6" fill="#0000e0" stroke="#000040" stroke-width="1"/><circle cx="771" cy="787" r="1.6" fill="#0000e0" stroke="#000040" stroke-width="1"/><circle cx="868" cy="824" r="1.6" fill="#0000e0" stroke="#000040" stroke-width="1"/><circle cx="966" cy="799" r="1.6" fill="#0000e0" stroke="#000040" stroke-width="1"/><circle cx="1063" cy="798" r="1.6" fill="#0000e0" stroke="#000040" stroke-width="1"/><circle cx="1160" cy="830" r="1.6" fill="#0000e0" stroke="#000040" stroke-width="1"/><circle cx="1257" cy="818" r="1.6" fill="#0000e0" stroke="#000040" stroke-width="1"/><rect x="107" y="819" width="66" height="16" fill="#fff"/><g shape-rendering="crispEdges" stroke="#000" stroke-dasharray="1 1"><line x1="108" y1="819.5" x2="172" y2="819.5"/><line x1="108" y1="834.5" x2="172" y2="834.5"/><line x1="107.5" y1="820" x2="107.5" y2="834"/><line x1="172.5" y1="820" x2="172.5" y2="834"/></g><text x="140.0" y="831" text-anchor="middle">88 724 264</text><rect x="153" y="769" width="72" height="16" fill="#fff"/><g shape-rendering="crispEdges" stroke="#000" stroke-dasharray="1 1"><line x1="154" y1="769.5" x2="224" y2="769.5"/><line x1="154" y1="784.5" x2="224" y2="784.5"/><line x1="153.5" y1="770" x2="153.5" y2="784"/><line x1="224.5" y1="770" x2="224.5" y2="784"/></g><text x="189.0" y="781" text-anchor="middle">237 042 008</text><rect x="256" y="845" width="60" height="16" fill="#fff"/><g shape-rendering="crispEdges" stroke="#000" stroke-dasharray="1 1"><line x1="257" y1="845.5" x2="315" y2="845.5"/><line x1="257" y1="860.5" x2="315" y2="860.5"/><line x1="256.5" y1="846" x2="256.5" y2="860"/><line x1="315.5" y1="846" x2="315.5" y2="860"/></g><text x="286.0" y="857" text-anchor="middle">9 534 496</text><rect x="347" y="800" width="72" height="16" fill="#fff"/><g shape-rendering="crispEdges" stroke="#000" stroke-dasharray="1 1"><line x1="348" y1="800.5" x2="418" y2="800.5"/><line x1="348" y1="815.5" x2="418" y2="815.5"/><line x1="347.5" y1="801" x2="347.5" y2="815"/><line x1="418.5" y1="801" x2="418.5" y2="815"/></g><text x="383.0" y="812" text-anchor="middle">144 156 392</text><rect x="444" y="775" width="72" height="16" fill="#fff"/><g shape-rendering="crispEdges" stroke="#000" stroke-dasharray="1 1"><line x1="445" y1="775.5" x2="515" y2="775.5"/><line x1="445" y1="790.5" x2="515" y2="790.5"/><line x1="444.5" y1="776" x2="444.5" y2="790"/><line x1="515.5" y1="776" x2="515.5" y2="790"/></g><text x="480.0" y="787" text-anchor="middle">220 497 648</text><rect x="541" y="784" width="72" height="16" fill="#fff"/><g shape-rendering="crispEdges" stroke="#000" stroke-dasharray="1 1"><line x1="542" y1="784.5" x2="612" y2="784.5"/><line x1="542" y1="799.5" x2="612" y2="799.5"/><line x1="541.5" y1="785" x2="541.5" y2="799"/><line x1="612.5" y1="785" x2="612.5" y2="799"/></g><text x="577.0" y="796" text-anchor="middle">191 771 584</text><rect x="641" y="827" width="66" height="16" fill="#fff"/><g shape-rendering="crispEdges" stroke="#000" stroke-dasharray="1 1"><line x1="642" y1="827.5" x2="706" y2="827.5"/><line x1="642" y1="842.5" x2="706" y2="842.5"/><line x1="641.5" y1="828" x2="641.5" y2="842"/><line x1="706.5" y1="828" x2="706.5" y2="842"/></g><text x="674.0" y="839" text-anchor="middle">65 055 736</text><rect x="735" y="768" width="72" height="16" fill="#fff"/><g shape-rendering="crispEdges" stroke="#000" stroke-dasharray="1 1"><line x1="736" y1="768.5" x2="806" y2="768.5"/><line x1="736" y1="783.5" x2="806" y2="783.5"/><line x1="735.5" y1="769" x2="735.5" y2="783"/><line x1="806.5" y1="769" x2="806.5" y2="783"/></g><text x="771.0" y="780" text-anchor="middle">241 967 816</text><rect x="832" y="805" width="72" height="16" fill="#fff"/><g shape-rendering="crispEdges" stroke="#000" stroke-dasharray="1 1"><line x1="833" y1="805.5" x2="903" y2="805.5"/><line x1="833" y1="820.5" x2="903" y2="820.5"/><line x1="832.5" y1="806" x2="832.5" y2="820"/><line x1="903.5" y1="806" x2="903.5" y2="820"/></g><text x="868.0" y="817" text-anchor="middle">130 090 432</text><rect x="930" y="780" width="72" height="16" fill="#fff"/><g shape-rendering="crispEdges" stroke="#000" stroke-dasharray="1 1"><line x1="931" y1="780.5" x2="1001" y2="780.5"/><line x1="931" y1="795.5" x2="1001" y2="795.5"/><line x1="930.5" y1="781" x2="930.5" y2="795"/><line x1="1001.5" y1="781" x2="1001.5" y2="795"/></g><text x="966.0" y="792" text-anchor="middle">204 246 408</text><rect x="1027" y="779" width="72" height="16" fill="#fff"/><g shape-rendering="crispEdges" stroke="#000" stroke-dasharray="1 1"><line x1="1028" y1="779.5" x2="1098" y2="779.5"/><line x1="1028" y1="794.5" x2="1098" y2="794.5"/><line x1="1027.5" y1="780" x2="1027.5" y2="794"/><line x1="1098.5" y1="780" x2="1098.5" y2="794"/></g><text x="1063.0" y="791" text-anchor="middle">207 890 984</text><rect x="1124" y="811" width="72" height="16" fill="#fff"/><g shape-rendering="crispEdges" stroke="#000" stroke-dasharray="1 1"><line x1="1125" y1="811.5" x2="1195" y2="811.5"/><line x1="1125" y1="826.5" x2="1195" y2="826.5"/><line x1="1124.5" y1="812" x2="1124.5" y2="826"/><line x1="1195.5" y1="812" x2="1195.5" y2="826"/></g><text x="1160.0" y="823" text-anchor="middle">112 422 224</text><rect x="1221" y="799" width="72" height="16" fill="#fff"/><g shape-rendering="crispEdges" stroke="#000" stroke-dasharray="1 1"><line x1="1222" y1="799.5" x2="1292" y2="799.5"/><line x1="1222" y1="814.5" x2="1292" y2="814.5"/><line x1="1221.5" y1="800" x2="1221.5" y2="814"/><line x1="1292.5" y1="800" x2="1292.5" y2="814"/></g><text x="1257.0" y="811" text-anchor="middle">148 965 072</text></svg>
<div class="a" style="left:1397px;top:762px;width:1px;height:170px;background:#a0a0a0"></div>
<div class="a" style="left:15px;top:931px;width:1383px;height:1px;background:#a0a0a0"></div>
<span class="t" style="left:1405.40px;top:770.52px;font-size:11.5px;line-height:15px;letter-spacing:0.153px;">Флаги:</span>
<span class="t" style="left:1405.40px;top:786.52px;font-size:11.5px;line-height:15px;font-weight:bold;letter-spacing:0.000px;">Частота Ошибок,</span>
<span class="t" style="left:1405.40px;top:801.52px;font-size:11.5px;line-height:15px;font-weight:bold;letter-spacing:0.059px;">Производительность, Статический,</span>
<span class="t" style="left:1405.40px;top:816.52px;font-size:11.5px;line-height:15px;font-weight:bold;letter-spacing:0.461px;">Критический</span>
<div class="a" style="left:1405px;top:844px;width:13px;height:13px;box-sizing:border-box;border:1px solid #8e8f8f;background:#fff"></div>
<div class="a" style="left:1407px;top:846px;width:9px;height:9px;background:linear-gradient(135deg,#c4c9d2,#e6e8ec 55%,#f4f4f6)"></div>
<svg class="a" style="left:1405px;top:844px" width="13" height="13" viewBox="0 0 13 13"><path d="M3.4 6.8 L5.7 10 L9.6 2.4" fill="none" stroke="#3a4f9e" stroke-width="1.9"/></svg>
<span class="t" style="left:1421.60px;top:843.52px;font-size:11.5px;line-height:15px;letter-spacing:0.211px;">Показ значений</span>
<span class="t" style="left:1405.40px;top:887.52px;font-size:11.5px;line-height:15px;letter-spacing:0.220px;">Атрибуты графика</span>
<div class="a" style="left:1405px;top:903px;width:217px;height:23px;box-sizing:border-box;border:1px solid #707070;border-radius:3px;background:linear-gradient(#f2f2f2 0,#ebebeb 50%,#dddddd 50%,#cfcfcf 100%);box-shadow:inset 0 0 0 1px #fcfcfc"></div>
<span class="t" style="left:1409.60px;top:907.72px;font-size:11.5px;line-height:15px;letter-spacing:0.003px;">Область данных</span>
<svg class="a" style="left:1610px;top:912px" width="8" height="5" viewBox="0 0 8 5"><path d="M0 0.5 H7 L3.5 4.5 Z" fill="#000"/></svg>
</body></html>
